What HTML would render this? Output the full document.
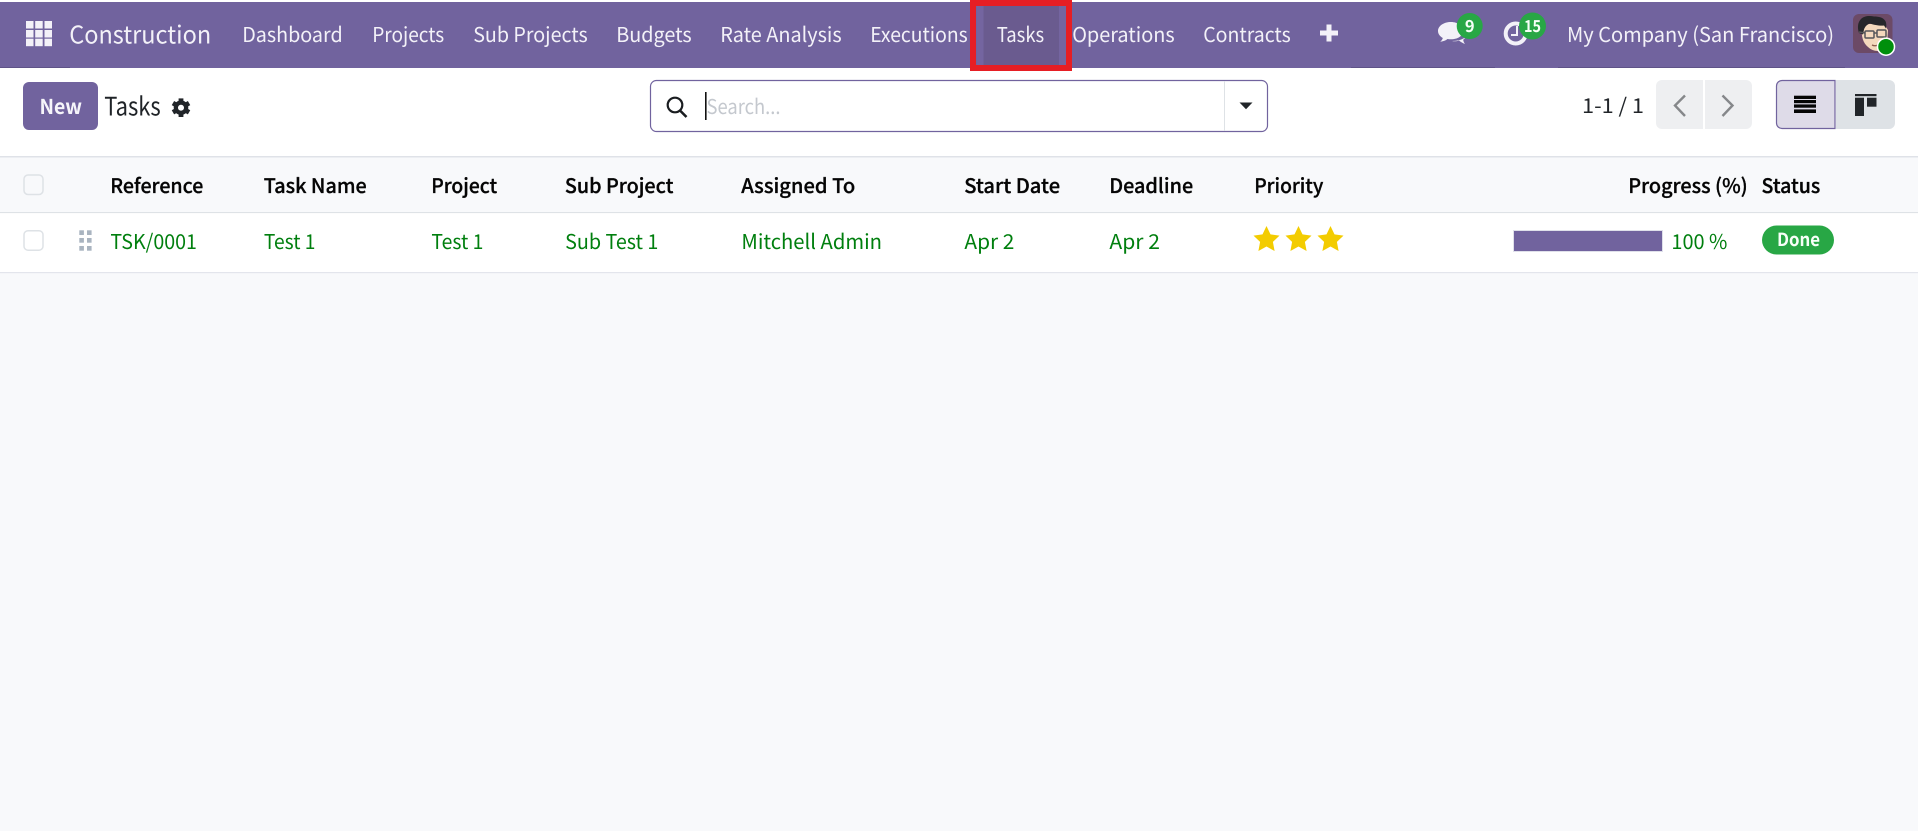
<!DOCTYPE html>
<html lang="en"><head><meta charset="utf-8"><title>Tasks</title>
<style>
html,body{margin:0;padding:0;width:1918px;height:831px;overflow:hidden;background:#f8f9fb}
svg{display:block}
text{font-family:"Noto Sans CJK JP","Liberation Sans",sans-serif;text-rendering:geometricPrecision}
.n{font-size:20.5px;fill:#f3f1f8;transform:translateX(-.8px)}
.h{font-size:20px;font-weight:500;fill:#050505;stroke:#050505;stroke-width:.3px;transform:translate(-.8px,1px)}
.r{font-size:20.5px;fill:#007f0e;transform:translateX(-.6px)}
</style></head><body>
<svg width="1918" height="831" viewBox="0 0 1918 831" xmlns="http://www.w3.org/2000/svg">
<rect width="1918" height="831" fill="#f8f9fb"/>
<rect width="1918" height="2" fill="#fff"/>
<rect y="2" width="1918" height="66" fill="#71639e"/>
<g fill="#5f5388"><rect y="67" width="70" height="1"/><rect x="1351" y="67" width="144" height="1"/><rect x="1558" y="67" width="287" height="1"/></g>
<rect y="68" width="1918" height="88" fill="#fff"/>

<!-- app grid -->
<g fill="#f3f1f8">
<rect x="26" y="21" width="7.500" height="7.500"/><rect x="35.200" y="21" width="7.500" height="7.500"/><rect x="44.500" y="21" width="7.500" height="7.500"/>
<rect x="26" y="30" width="7.500" height="7.500"/><rect x="35.200" y="30" width="7.500" height="7.500"/><rect x="44.500" y="30" width="7.500" height="7.500"/>
<rect x="26" y="38.700" width="7.500" height="7.500"/><rect x="35.200" y="38.700" width="7.500" height="7.500"/><rect x="44.500" y="38.700" width="7.500" height="7.500"/>
</g>
<text x="70" y="43.500" class="n" style="font-size:24.500px" textLength="142" lengthAdjust="spacingAndGlyphs">Construction</text>
<text x="243" y="42" class="n" textLength="100.500" lengthAdjust="spacingAndGlyphs">Dashboard</text>
<text x="373" y="42" class="n" textLength="72" lengthAdjust="spacingAndGlyphs">Projects</text>
<text x="474" y="42" class="n" textLength="114.500" lengthAdjust="spacingAndGlyphs">Sub Projects</text>
<text x="617" y="42" class="n" textLength="75.500" lengthAdjust="spacingAndGlyphs">Budgets</text>
<text x="721" y="42" class="n" textLength="121.500" lengthAdjust="spacingAndGlyphs">Rate Analysis</text>
<text x="871" y="42" class="n" textLength="97.500" lengthAdjust="spacingAndGlyphs">Executions</text>

<!-- active tab with annotation -->
<rect x="977" y="6" width="89" height="59" fill="#7465a0"/>
<rect x="983.500" y="6" width="75.500" height="59" fill="#6a5b8f"/>
<rect x="973" y="3" width="96" height="65" fill="none" stroke="#e61e24" stroke-width="6"/>
<text x="997.500" y="42" class="n" textLength="47.500" lengthAdjust="spacingAndGlyphs">Tasks</text>

<text x="1073" y="42" class="n" textLength="102.500" lengthAdjust="spacingAndGlyphs">Operations</text>
<text x="1204" y="42" class="n" textLength="87.500" lengthAdjust="spacingAndGlyphs">Contracts</text>
<path d="M1326.500 24.500h5v6h6.500v5h-6.500v6h-5v-6H1320v-5h6.500z" fill="#f3f1f8"/>

<!-- chat -->
<path d="M1451 22c-7 0-13 3.800-13 9 0 3 2 5.400 4.800 7-.3 1.400-1.200 2.600-2.600 3.700 2.800-.2 5.300-1.100 7.300-2.700 1.200.2 2.400.3 3.500.3 7 0 12-3.600 12-8.300S1458 22 1451 22z" fill="#f3f1f8"/>
<path d="M1452 41c2.500.5 5 .3 7-.5 1.500 1.300 3.500 2.700 6 3.500-1-1.300-1.600-2.800-1.800-4.300 1.200-.8 2-1.700 2.500-2.700-3 2.500-8 4-13.700 4z" fill="#f3f1f8"/>
<circle cx="1469.700" cy="26" r="13" fill="#28a745"/>
<text x="1469.700" y="32" text-anchor="middle" style="font-size:16.500px;font-weight:700" fill="#f7fff7">9</text>

<!-- clock -->
<circle cx="1515.700" cy="33.500" r="10" fill="none" stroke="#f3f1f8" stroke-width="4"/>
<path d="M1517 26v9h-6" fill="none" stroke="#f3f1f8" stroke-width="2"/>
<circle cx="1532.500" cy="26" r="13.500" fill="#28a745"/>
<text x="1532.500" y="32" text-anchor="middle" style="font-size:16.500px;font-weight:700" fill="#f7fff7" textLength="17" lengthAdjust="spacingAndGlyphs">15</text>

<text x="1567.800" y="42" class="n" textLength="267" lengthAdjust="spacingAndGlyphs">My Company (San Francisco)</text>

<!-- avatar -->
<rect x="1853" y="14" width="39.500" height="39" rx="6" fill="#6c4a66"/>
<path d="M1862 28c-1 8 1 15 6 19 4 4 10 5 15 3l4-6 1-14-4-6h-18z" fill="#f4d9bd"/>
<path d="M1859 33c-2-6-1-11 2-14 3-3 8-3.500 13-2.500 5 0 9 1 11 4 1.500 2 1.500 5 1 8l-2-3c-4 .5-10-.5-14-2-3 1-5 3-6 6l-1 5z" fill="#26272b"/>
<g fill="none" stroke="#55565a" stroke-width="1.500">
<rect x="1865" y="31" width="9" height="7" rx="1"/><rect x="1877" y="30" width="9" height="7" rx="1"/><path d="M1874 33h3M1859 32l6 1"/>
</g>
<path d="M1872 45c2 1 4 1 6 0" fill="none" stroke="#8a5a4a" stroke-width="1.300"/>
<circle cx="1886" cy="46.700" r="8.500" fill="#008f0c" stroke="#fff" stroke-width="1.500"/>

<!-- toolbar -->
<rect x="23" y="82" width="75" height="48" rx="6" fill="#71639e"/>
<text x="39.500" y="114" style="font-size:20.500px;font-weight:700" fill="#f6f5fa" textLength="42.500" lengthAdjust="spacingAndGlyphs">New</text>
<text x="104.200" y="115.500" style="font-size:25.500px" fill="#1f2327" textLength="56.500" lengthAdjust="spacingAndGlyphs">Tasks</text>
<g transform="translate(181 107.700)" fill="#212529">
<path fill-rule="evenodd" d="M0-7.300a7.300 7.300 0 1 0 .01 0zM0-3a3 3 0 1 1-.01 0z"/>
<rect x="-2.400" y="-9.300" width="4.800" height="4"/><rect x="-2.400" y="5.300" width="4.800" height="4"/>
<g transform="rotate(60)"><rect x="-2.400" y="-9.300" width="4.800" height="4"/><rect x="-2.400" y="5.300" width="4.800" height="4"/></g>
<g transform="rotate(120)"><rect x="-2.400" y="-9.300" width="4.800" height="4"/><rect x="-2.400" y="5.300" width="4.800" height="4"/></g>
</g>

<!-- search -->
<rect x="650.500" y="80.500" width="617" height="51" rx="6" fill="#fff" stroke="#71639e" stroke-width="1.200"/>
<rect x="1224" y="81" width="1" height="50" fill="#dee2e6"/>
<circle cx="675" cy="105" r="7.300" fill="none" stroke="#1a1d20" stroke-width="2.200"/>
<path d="M680 110.500l6.500 6.500" stroke="#1a1d20" stroke-width="2.600" fill="none"/>
<rect x="705" y="92" width="1.600" height="28" fill="#111"/>
<text x="706.500" y="114" style="font-size:20.500px" fill="#c4c8ce" textLength="74" lengthAdjust="spacingAndGlyphs">Search...</text>
<path d="M1239.500 102.500h13l-6.500 6.800z" fill="#212529"/>

<!-- pager -->
<text x="1582" y="113" style="font-size:20.500px" fill="#212529" textLength="62" lengthAdjust="spacingAndGlyphs">1-1 / 1</text>
<rect x="1656" y="80" width="96" height="49" rx="6" fill="#eeeff1"/>
<rect x="1703" y="80" width="2" height="49" fill="#fff"/>
<path d="M1685 95.500l-10 10 10 10.500M1722.500 95.500l10 10-10 10.500" fill="none" stroke="#85878a" stroke-width="2.400"/>

<!-- view switch -->
<path d="M1835 80.500h-53a5.500 5.500 0 0 0-5.500 5.500v37a5.500 5.500 0 0 0 5.500 5.500h53z" fill="#dedbe8" stroke="#71639e" stroke-width="1.200"/>
<path d="M1836 80h53a6 6 0 0 1 6 6v37a6 6 0 0 1-6 6h-53z" fill="#dee2e6"/>
<g fill="#050505"><rect x="1794" y="95.700" width="22" height="3.300"/><rect x="1794" y="100" width="22" height="3.200"/><rect x="1794" y="104.400" width="22" height="3.300"/><rect x="1794" y="109.400" width="22" height="3.600"/></g>
<g fill="#212529"><rect x="1855" y="94" width="21.500" height="2.200"/><rect x="1855" y="97.700" width="9" height="18.300"/><rect x="1867" y="97.700" width="9.500" height="9"/></g>

<!-- table -->
<rect y="156" width="1918" height="1.500" fill="#dfe2e8"/>
<rect y="157.500" width="1918" height="54.500" fill="#f8f9fb"/>
<rect y="212" width="1918" height="1.200" fill="#dee2e6"/>
<rect y="213.200" width="1918" height="58.800" fill="#fff"/>
<rect y="272" width="1918" height="1.200" fill="#e3e5ec"/>

<rect x="24" y="175" width="19" height="19.500" rx="4" fill="#f8f9fb" stroke="#dee2e6" stroke-width="1.500"/>
<rect x="24" y="230.700" width="19" height="19.500" rx="4" fill="#fff" stroke="#dee2e6" stroke-width="1.500"/>
<g fill="#a9b4c0"><rect x="79.300" y="230.300" width="4.600" height="4.700"/><rect x="87" y="230.300" width="4.600" height="4.700"/><rect x="79.300" y="238" width="4.600" height="4.700"/><rect x="87" y="238" width="4.600" height="4.700"/><rect x="79.300" y="246" width="4.600" height="4.700"/><rect x="87" y="246" width="4.600" height="4.700"/></g>

<text x="111" y="192" class="h" textLength="93.200" lengthAdjust="spacingAndGlyphs">Reference</text>
<text x="264.500" y="192" class="h" textLength="103" lengthAdjust="spacingAndGlyphs">Task Name</text>
<text x="432" y="192" class="h" textLength="66" lengthAdjust="spacingAndGlyphs">Project</text>
<text x="565.700" y="192" class="h" textLength="108.500" lengthAdjust="spacingAndGlyphs">Sub Project</text>
<text x="742" y="192" class="h" textLength="114" lengthAdjust="spacingAndGlyphs">Assigned To</text>
<text x="965" y="192" class="h" textLength="95.900" lengthAdjust="spacingAndGlyphs">Start Date</text>
<text x="1110" y="192" class="h" textLength="84" lengthAdjust="spacingAndGlyphs">Deadline</text>
<text x="1255" y="192" class="h" textLength="69.200" lengthAdjust="spacingAndGlyphs">Priority</text>
<text x="1629" y="192" class="h" textLength="119.500" lengthAdjust="spacingAndGlyphs">Progress (%)</text>
<text x="1762.300" y="192" class="h" textLength="58.800" lengthAdjust="spacingAndGlyphs">Status</text>

<text x="111" y="249" class="r" textLength="86.500" lengthAdjust="spacingAndGlyphs">TSK/0001</text>
<text x="264.500" y="249" class="r" textLength="51.500" lengthAdjust="spacingAndGlyphs">Test 1</text>
<text x="432" y="249" class="r" textLength="52" lengthAdjust="spacingAndGlyphs">Test 1</text>
<text x="565.700" y="249" class="r" textLength="93.300" lengthAdjust="spacingAndGlyphs">Sub Test 1</text>
<text x="742" y="249" class="r" textLength="140.600" lengthAdjust="spacingAndGlyphs">Mitchell Admin</text>
<text x="965" y="249" class="r" textLength="50" lengthAdjust="spacingAndGlyphs">Apr 2</text>
<text x="1110" y="249" class="r" textLength="50.500" lengthAdjust="spacingAndGlyphs">Apr 2</text>

<g fill="#f3cc00">
<path d="M1266.500 226l4 8.400 9 1.200-6.600 6.300 1.700 9.100-8.100-4.500-8.100 4.500 1.700-9.100-6.600-6.300 9-1.200z"/>
<path d="M1298.500 226l4 8.400 9 1.200-6.600 6.300 1.700 9.100-8.100-4.500-8.100 4.500 1.700-9.100-6.600-6.300 9-1.200z"/>
<path d="M1330.500 226l4 8.400 9 1.200-6.600 6.300 1.700 9.100-8.100-4.500-8.100 4.500 1.700-9.100-6.600-6.300 9-1.200z"/>
</g>

<rect x="1513.500" y="230.500" width="149" height="21" fill="#71639e" stroke="#dfe0ea" stroke-width="1"/>
<text x="1672" y="249" class="r" textLength="56" lengthAdjust="spacingAndGlyphs">100 %</text>
<rect x="1762" y="225.500" width="72" height="29" rx="14.500" fill="#28a745"/>
<text x="1777" y="246" style="font-size:18px;font-weight:700" fill="#f7fff8" textLength="43" lengthAdjust="spacingAndGlyphs">Done</text>
</svg>
</body></html>
